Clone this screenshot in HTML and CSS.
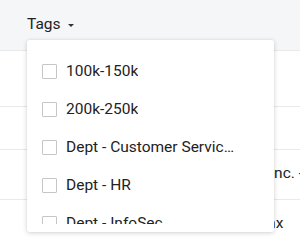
FILE: index.html
```html
<!DOCTYPE html>
<html lang="en">
<head>
    <meta charset="UTF-8">
    <meta name="viewport" content="width=device-width, initial-scale=1.0">
    <title>Tags filter</title>
    <link rel="stylesheet" href="styles.css">
</head>
<body>
    <div class="page">
        <div class="toolbar">
            <div class="filter">
                <span>Tags</span>
                <span class="caret"></span>
            </div>
        </div>
        <div class="table">
            <div class="row row-a"></div>
            <div class="row row-b"></div>
            <div class="row row-c"><span class="cell">Acme Inc. - Sales</span></div>
            <div class="row row-d"><span class="cell cell-fax">Fax</span></div>
        </div>

        <div class="dropdown">
            <ul class="options">
                <li><span class="check"></span><span class="label">100k-150k</span></li>
                <li><span class="check"></span><span class="label">200k-250k</span></li>
                <li><span class="check"></span><span class="label">Dept - Customer Services</span></li>
                <li><span class="check"></span><span class="label">Dept - HR</span></li>
                <li><span class="check"></span><span class="label">Dept - InfoSec</span></li>
                <li><span class="check"></span><span class="label">Dept - Sales</span></li>
            </ul>
        </div>
    </div>
</body>
</html>
```
FILE: styles.css
```css
body {
    margin: 0;
    padding: 0;
    font-family: Roboto, "Noto Sans", sans-serif;
    font-size: 15.5px;
    color: #222;
    background: #fff;
}
.page {
    position: relative;
    width: 300px;
    height: 246px;
    overflow: hidden;
}
.toolbar {
    height: 51px;
    background: #f5f6f8;
    border-bottom: 1px solid #e8e9eb;
    box-sizing: border-box;
    padding-left: 27px;
    display: flex;
    align-items: center;
}
.filter {
    display: flex;
    align-items: center;
    margin-top: -2px;
}
.caret {
    width: 0;
    height: 0;
    margin-left: 7px;
    margin-top: 2px;
    border-left: 3px solid transparent;
    border-right: 3px solid transparent;
    border-top: 3px solid #333;
}
.row {
    border-bottom: 1px solid #e8e9eb;
    box-sizing: border-box;
    display: flex;
    align-items: center;
}
.row-a { height: 56px; }
.row-b { height: 43px; }
.row-c { height: 50px; padding-bottom: 4px; }
.row-d { height: 50px; padding-bottom: 4px; }
.cell {
    white-space: nowrap;
    padding-left: 226px;
}
.cell-fax {
    padding-left: 259px;
}

/* tags dropdown */
.dropdown {
    position: absolute;
    left: 27px;
    top: 40px;
    width: 247px;
    height: 192px;
    padding: 8px 0;
    box-sizing: border-box;
    background: #fff;
    border-radius: 2px;
    box-shadow: 0 1px 5px rgba(0, 0, 0, 0.18), 0 0 1px rgba(0, 0, 0, 0.12);
}
.options {
    list-style: none;
    margin: 0;
    padding: 4px 0 0;
    height: 176px;
    overflow: hidden;
    box-sizing: border-box;
}
.options li {
    height: 38px;
    display: flex;
    align-items: center;
    padding-left: 15px;
}
.check {
    flex: none;
    width: 15px;
    height: 15px;
    box-sizing: border-box;
    border: 1px solid #c6c6c6;
    border-radius: 1px;
    margin-right: 9px;
}
.label {
    max-width: 169px;
    white-space: nowrap;
    overflow: hidden;
    text-overflow: ellipsis;
}
```
